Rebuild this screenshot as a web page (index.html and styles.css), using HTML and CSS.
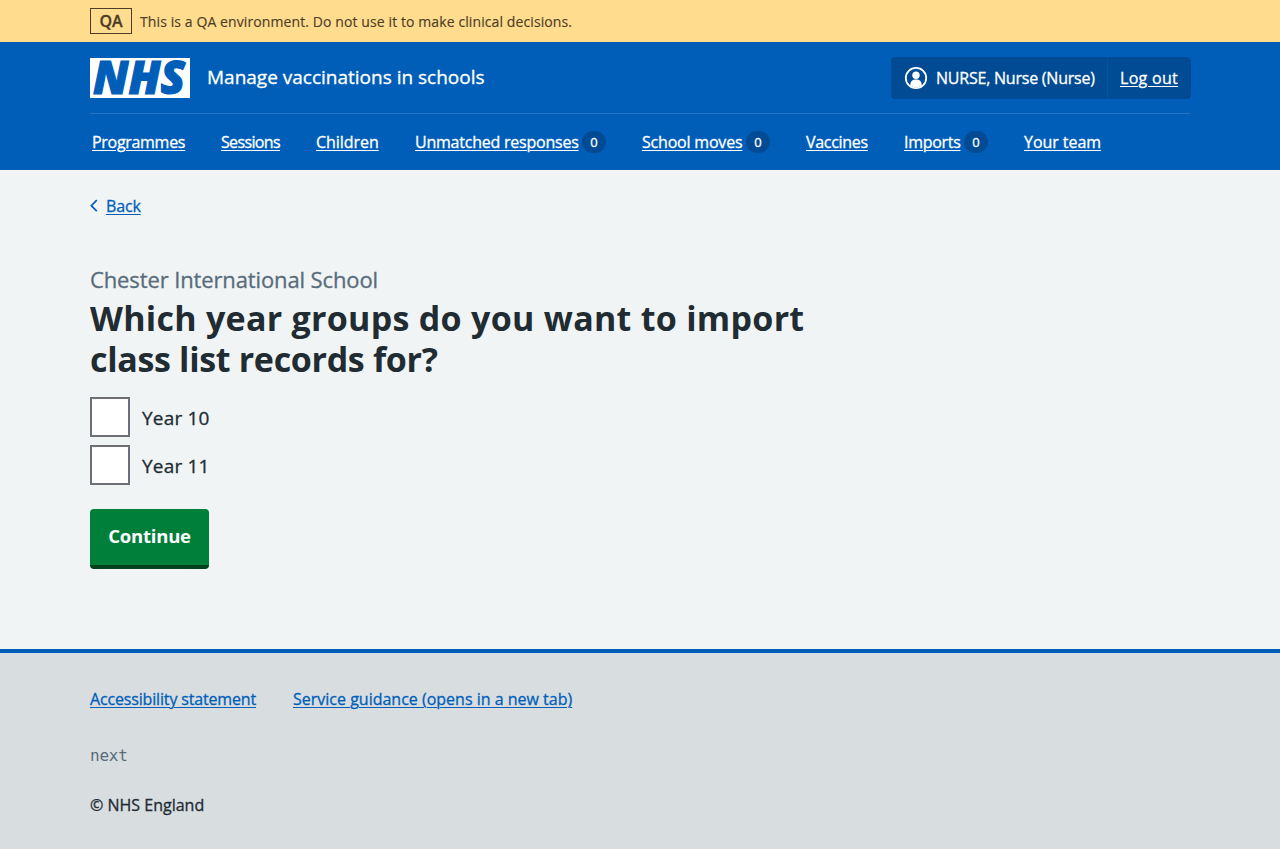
FILE: index.html
```html
<!DOCTYPE html>
<html lang="en">
<head>
<meta charset="utf-8">
<title>Which year groups do you want to import class list records for?</title>
<link rel="stylesheet" href="styles.css">
</head>
<body>
<div class="environment"><div class="container environment-inner"><strong class="environment-tag">QA</strong><span class="environment-text">This is a QA environment. Do not use it to make clinical decisions.</span></div></div>
<header class="header">
  <div class="container">
    <div class="header-top">
      <a class="brand" href="#">
        <svg class="logo" width="100" height="40" viewBox="0 0 100 40" role="img" aria-label="NHS"><path fill="#fff" d="M0 0h100v40H0z"/><text class="logo-text" x="3" y="36.4" textLength="92" lengthAdjust="spacingAndGlyphs">NHS</text></svg>
        <span class="service-name">Manage vaccinations in schools</span>
      </a>
      <div class="account">
        <div class="account-user">
          <svg width="24" height="24" viewBox="0 0 24 24" aria-hidden="true"><circle cx="12" cy="12" r="10.2" fill="none" stroke="#fff" stroke-width="1.8"/><circle cx="12" cy="9.2" r="3.7" fill="#fff"/><path fill="#fff" d="M6.4 19.6v-1.2c0-3 2.1-4.9 5.6-4.9s5.6 1.9 5.6 4.9v1.2A9.6 9.6 0 0 1 12 21.5a9.6 9.6 0 0 1-5.6-1.9z"/></svg>
          <span class="account-name">NURSE, Nurse (Nurse)</span>
        </div>
        <a class="account-link" href="#">Log out</a>
      </div>
    </div>
    <nav class="nav">
      <div class="nav-item"><a class="programmes" href="#">Programmes</a></div>
      <div class="nav-item"><a class="sessions" href="#">Sessions</a></div>
      <div class="nav-item"><a class="children" href="#">Children</a></div>
      <div class="nav-item"><a class="responses" href="#">Unmatched responses</a><span class="count">0</span></div>
      <div class="nav-item"><a class="moves" href="#">School moves</a><span class="count">0</span></div>
      <div class="nav-item"><a class="vaccines" href="#">Vaccines</a></div>
      <div class="nav-item"><a class="imports" href="#">Imports</a><span class="count">0</span></div>
      <div class="nav-item"><a class="team" href="#">Your team</a></div>
    </nav>
  </div>
</header>
<main class="main container">
  <div class="back"><svg width="8" height="14" viewBox="0 0 8 14" aria-hidden="true"><path d="M6.8 1.2 1.3 6.7l5.5 5.5" fill="none" stroke="#005eb8" stroke-width="1.7"/></svg><a href="#">Back</a></div>
  <h1 class="title"><span class="caption">Chester International School</span><span class="title-line">Which year groups do you want to import</span><span class="title-line second">class list records for?</span></h1>
  <div class="options">
    <label class="option"><input class="box" type="checkbox"><span class="option-label">Year 10</span></label>
    <label class="option"><input class="box" type="checkbox"><span class="option-label">Year 11</span></label>
  </div>
  <button class="button" type="button">Continue</button>
</main>
<footer class="footer">
  <div class="container">
    <div class="footer-links"><a class="access" href="#">Accessibility statement</a><a class="guidance" href="#">Service guidance (opens in a new tab)</a></div>
    <div class="version">next</div>
    <div class="copyright">© NHS England</div>
  </div>
</footer>
</body>
</html>
```
FILE: styles.css
```css
* { box-sizing: border-box; }
body { margin: 0; min-height: 849px; display: flex; flex-direction: column; background: #f0f4f5; color: #212b32; font: 16px/24px "Open Sans", "Noto Sans", sans-serif; -webkit-text-stroke: 0.3px; }
a { color: #005eb8; text-decoration: underline; text-decoration-thickness: 1px; text-underline-offset: 2px; white-space: nowrap; }
.container { width: 1100px; margin: 0 auto; }
.environment { height: 42px; background: #ffdc8e; color: #4d3d26; }
.environment-inner { display: flex; align-items: center; gap: 8px; height: 42px; }
.environment-tag { width: 42px; height: 26px; border: 1px solid #4d3d26; text-align: center; line-height: 24px; font-size: 16px; font-weight: 600; }
.environment-text { padding-top: 2px; font-size: 14px; letter-spacing: 0.1px; -webkit-text-stroke: 0.15px; }
.header { height: 128px; background: #005eb8; color: #fff; }
.header a { color: #fff; }
.header-top { display: flex; justify-content: space-between; align-items: center; height: 72px; border-bottom: 1px solid #2674c2; }
.brand { display: flex; align-items: center; gap: 17px; }
.header .brand { text-decoration: none; }
.logo { overflow: visible; }
.logo-text { font: italic 800 45.5px "Open Sans", sans-serif; fill: #005eb8; stroke: #005eb8; stroke-width: 1.2px; -webkit-text-stroke: 1.2px #005eb8; }
.service-name { padding-bottom: 2px; font-size: 19px; }
.account { display: flex; height: 42px; margin-right: -1px; border-radius: 4px; background: #004b93; }
.account-user { display: flex; align-items: center; gap: 8px; width: 217px; padding-left: 13px; border-right: 1px solid #0055a6; white-space: nowrap; }
.account-link { width: 83px; padding-left: 12px; line-height: 42px; letter-spacing: 0.3px; }
.account-name { letter-spacing: -0.22px; }
.nav { display: flex; gap: 36px; height: 56px; padding-left: 2px; align-items: center; letter-spacing: -0.3px; }
.nav-item { display: flex; align-items: center; gap: 4px; }
.count { width: 24px; height: 22px; border-radius: 12px; background: #004b93; text-align: center; font-size: 13px; line-height: 23px; letter-spacing: 0; }
.programmes { width: 93px; }
.sessions { width: 59px; letter-spacing: -0.65px; }
.children { width: 63px; letter-spacing: -0.05px; }
.responses { width: 163px; letter-spacing: -0.23px; }
.moves { width: 100px; letter-spacing: -0.2px; }
.vaccines { width: 62px; }
.imports { width: 56px; }
.team { letter-spacing: -0.05px; }
.main { flex: 1; padding-top: 24px; }
.back { display: flex; align-items: center; gap: 8px; height: 24px; letter-spacing: -0.15px; }
.title { margin: 45px 0 17px; font-size: 34px; line-height: 41px; font-weight: 700; -webkit-text-stroke: 0; }
.caption { display: block; font-size: 22px; line-height: 33px; font-weight: 400; color: #586c7b; margin-bottom: 2px; letter-spacing: -0.12px; -webkit-text-stroke: 0.3px; }
.title-line { display: block; white-space: nowrap; letter-spacing: 0.28px; }
.title-line.second { letter-spacing: -0.32px; }
.options { display: flex; flex-direction: column; gap: 8px; }
.option { display: flex; align-items: center; gap: 12px; height: 40px; font-size: 19px; }
.option-label { padding-top: 2px; letter-spacing: 0.2px; }
.box { appearance: none; width: 40px; height: 40px; margin: 0; border: 2px solid #6e6e78; background: #fff; }
.button { width: 119px; height: 60px; margin-top: 24px; padding: 0 0 3px; border: 0; border-bottom: 4px solid #00401e; border-radius: 4px; background: #007f3b; color: #fff; font: 700 18.5px "Open Sans", sans-serif; letter-spacing: -0.2px; -webkit-text-stroke: 0; }
.footer { height: 200px; border-top: 4px solid #005eb8; background: #d8dde0; padding-top: 34px; }
.footer-links { display: flex; gap: 37px; }
.access { width: 166px; letter-spacing: -0.16px; }
.guidance { letter-spacing: 0; }
.version { margin-top: 33px; font-family: "DejaVu Sans Mono", monospace; color: #586c7b; letter-spacing: -0.2px; -webkit-text-stroke: 0; }
.copyright { margin-top: 25px; }
```
